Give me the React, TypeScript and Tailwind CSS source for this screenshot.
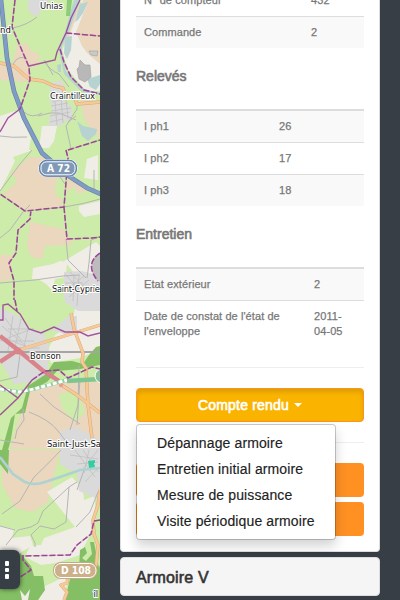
import React from "react";

type Row = [string, string];

function DataTable({ rows, cols, thick = true }: { rows: Row[]; cols: string; thick?: boolean }) {
  return (
    <div className={thick ? "border-t-2 border-[#ddd]" : ""}>
      {rows.map(([label, value], i) => (
        <div
          key={label}
          className={`grid ${cols} text-[11px] leading-[15px] tracking-[0.08px] ${i > 0 ? "border-t border-[#ddd]" : ""} ${
            (i % 2 === 0) === thick ? "bg-[#f9f9f9]" : "bg-white"
          }`}
        >
          <div className="p-2">{label}</div>
          <div className="p-2">{value}</div>
        </div>
      ))}
    </div>
  );
}

const boundaryPaths = [
  "M15 0L12 27L29 67L30 80L20 109M66 33L100 36M60 49L64 62L71 77L84 90L100 94M68 150L100 140",
  "M66 150L68 158L64 207L25 211L0 194M31 210L30 219L18 230L16 253L9 263L14 281L14 300M64 207L67 239L92 238L100 237M100 253Q84 264 98 281",
  "M15 300L17 311M32 380L45 371L59 370L68 378L92 367L100 369",
  "M100 520L94 521L91 534L77 545L70 555L23 556M23 555V560L31 570L20 577",
];

const solidBoundaryPaths = [
  "M20 109L8 118L0 132M29 66L55 60L57 52L66 33L71 18L80 0",
  "M0 320H3V305L8 304L20 314L29 329L41 333L54 327L65 332L80 332L88 336L100 333M0 385L18 398L32 380M18 398L0 415",
];

function MapView() {
  const street = { fill: "none", stroke: "#b5b5b5", strokeWidth: 1 };
  const label = {
    fontFamily: '"DejaVu Sans", "Noto Sans", sans-serif',
    fill: "#111",
    stroke: "#fff",
    strokeWidth: 2,
    paintOrder: "stroke" as const,
    strokeLinejoin: "round" as const,
  };
  return (
    <svg width="100" height="600" viewBox="0 0 100 600" className="block">
      <rect width="100" height="600" fill="#cdeba9" />
      {/* fields */}
      <g fill="#ead7bd">
        <path d="M84 0H100V90L88 80L62 55L66 34L72 14Z" />
        <path d="M17 46L27 43L30 50L40 55L37 67L29 66L30 79L24 82L0 80V62L12 64Z" />
        <path d="M80 100L100 101V138L85 121Z" />
        <path d="M30 157L42 157L55 167L70 170L69 178L56 179L55 194L64 201L59 207L25 211L3 194L15 184L16 177L10 173Z" />
        <path d="M67 180L85 184V192L78 194L74 186L67 193Z" />
        <path d="M30 222L63 229L72 241L71 245L45 246L42 259L31 257L27 247Z" />
        <path d="M0 255H11V263L10 281H0Z" />
        <path d="M28 391L61 382L100 382V449H10L17 425Z" />
        <path d="M7 450H60L50 492L47 503L32 512L15 508L2 484V463L9 471Z" />
      </g>
      <path d="M58 395L71 391L82 402L85 413L75 421L63 410Z" fill="#cdeba9" />
      {/* open ground */}
      <g fill="#f0ede6">
        <path d="M0 116L18 110L31 138L29 150H0V127Z" />
        <path d="M42 126H57L54 141L49 148H39Z" />
        <path d="M0 150H33L13 157L15 161L0 191Z" />
        <path d="M87 159L98 155V180L84 178Z" />
        <path d="M79 206L100 201V214L84 217L79 211Z" />
        <path d="M33 268L53 264L60 261L67 262L66 277L55 279L52 290L46 284L38 279L32 279Z" />
        <path d="M64 261L96 242L100 246V280L80 280Z" />
        <path d="M55 335L72 322L76 304L93 300H100V350L80 358L51 363L47 352Z" />
        <path d="M80 300L84 317L100 311V300Z" />
        <path d="M47 492L72 477L83 489L84 500L95 496V525L80 555L56 563L41 565L25 557L30 546L41 545L44 538L75 527Z" />
        <path d="M0 526L14 529L12 538L30 536L33 545L20 553H0Z" />
        <path d="M37 590L68 575L65 600H39Z" />
      </g>
      {/* built-up areas */}
      <g fill="#dadada">
        <path d="M28 0H50L41 10L37 17L29 12Z" />
        <path d="M50 84L61 80L66 89L62 99L72 107L72 121H63L62 126H49V118L53 112L50 101Z" />
        <path d="M0 308L20 317L29 329L43 331L49 348L47 374L32 382L14 384L0 361Z" />
        <path d="M52 330L69 316H77V334H64Z" />
        <path d="M64 272L82 271L100 276V311H78L64 301Z" />
        <path d="M60 431L76 427L100 440V500L79 491L77 474L60 464Z" />
        <path d="M70 450H100V487L91 492L80 477Z" />
      </g>
      {/* river and ponds */}
      <path d="M75 0H83L70 34L62 50L68 70L86 91H100V64L88 54L82 46L76 32L80 22L87 4Z" fill="#f0ede6" />
      <g fill="#b6d3d2">
        <path d="M74 0L80 0L70 29L62 46L62 56L66 71L81 88L95 92H100V95L82 92L64 74L59 50L65 32Z" />
        <path d="M80 4L88 2L83 13L78 20L75 22Z" />
        <path d="M65 37L72 36L71 50L67 59L64 53Z" />
        <path d="M87 79L100 75V84L96 90L90 87Z" />
        <path d="M57 65L61 64V72H58Z" />
        <path d="M77 121L83 126L97 129L96 134L88 141L82 136Z" />
        <path d="M98 253L93 263V270L99 280H100V253Z" />
      </g>
      <path d="M80 60L85 65L90 65L91 77L85 82L79 79L77 69L79 67Z" fill="#b8b8b8" stroke="#9f9f9f" strokeWidth=".6" />
      <path d="M89 51L98 51L97 56L91 55Z" fill="#c5caca" stroke="#a0a0a0" strokeWidth=".6" />
      <path d="M100 253Q84 266 100 282Z" fill="#bcbcbc" />
      <path d="M72 0L70 16L66 16L67 0Z" fill="#8dcc78" />
      {/* woods */}
      <g fill="#84be65">
        <path d="M0 450H9L8 474L0 464Z" />
        <path d="M28 386L46 374L54 362L72 361L83 364L89 355L96 347L100 346V365L80 369L57 371L47 382L30 391L25 413L15 414L11 439L8 450H2L11 418L22 408Z" />
        <path d="M20 553L31 566L34 576L43 576L45 590L38 600H0V580H20Z" />
        <path d="M80 550L85 547L87 553L82 558L86 561L92 554L90 542L94 542L99 568L100 565V600H65L70 579L79 570Z" />
      </g>
      <path d="M20 590L25 596L30 589L28 600H22Z" fill="#f0ede6" />
      {/* minor streets */}
      <g {...street}>
        <path d="M13 28Q27 25 37 17M44 60Q49 70 59 74L69 87M46 63L53 75M38 116L50 113L59 113L76 120M77 103V109L66 126L70 144L71 150M0 136Q12 138 27 137M24 112Q32 119 42 113M68 122L76 116M13 64Q19 54 27 59" />
        <path d="M32 150L20 164L0 191M0 238L10 230L23 212L30 205M60 177L65 184M64 207Q84 204 100 199M66 239L68 260L86 278M0 283L35 280L63 276L80 275M87 278L89 263L91 240L99 237M94 170V190" />
        <path d="M0 440L24 444M23 409L24 420L17 430L15 439M29 412Q50 420 58 431L65 440M40 394L54 407L80 424M0 381L17 377L20 354M79 366L78 405L70 430M80 379L77 425" />
        <path d="M61 450Q43 469 34 477L20 501L2 514M77 482L69 487L43 511L38 523L31 527L18 530L6 545M69 487L66 522L54 529L40 526L31 535L35 543V547M0 526L15 530M76 527L90 512L98 492M77 490L84 470" />
      </g>
      <g stroke="#c0c0c0" strokeWidth=".8" fill="none">
        <path d="M52 102L67 98M51 106L68 103M51 111L71 108M50 116L70 112M55 102L57 125M61 98L63 123M66 99L68 119M50 122L63 119" />
        <path d="M5 318L21 340M2 326L26 346M0 336L30 348M13 316L8 351M21 319L14 352M28 329L23 351M0 341L34 328M8 329H30M13 341H34M17 348H40" />
        <path d="M65 274L81 292M70 272L87 290M66 290L84 276M69 297L89 280M65 283H83M74 274L73 301M79 276L77 306" />
        <path d="M75 450L95 477M83 450L98 472M70 455L98 459M77 464L98 462M81 471L98 450M85 482L98 468M89 450L84 473" />
      </g>
      {/* railway */}
      <path d="M0 352H100" stroke="#a5a5a5" strokeWidth="2" />
      <path d="M0 457L13 474L25 482Q34 486 45 482L60 477L80 470L100 468" stroke="#add2cf" strokeWidth="2.6" fill="none" />
      {/* roads */}
      <g fill="none" stroke="#d3ab80" strokeWidth="3.4" strokeLinejoin="round">
        <path d="M0 63L14 66L29 79L43 81L54 86L63 88L65 94L75 99L77 104L100 102" />
        <path d="M19 350L71 334L100 325M71 313L74 329L83 353L82 362L86 368L88 405L92 438M60 384L77 395L100 413" />
        <path d="M100 490L98 505L93 520L94 534L98 545L96 566M68 577L67 583L61 585L67 592L64 600" />
      </g>
      <g fill="none" stroke="#f8c995" strokeWidth="2.4" strokeLinejoin="round">
        <path d="M0 63L14 66L29 79L43 81L54 86L63 88L65 94L75 99L77 104L100 102" />
        <path d="M19 350L71 334L100 325M71 313L74 329L83 353L82 362L86 368L88 405L92 438M60 384L77 395L100 413" />
        <path d="M100 490L98 505L93 520L94 534L98 545L96 566M68 577L67 583L61 585L67 592L64 600" />
      </g>
      <path d="M0 336L18 350L42 370L59 381M0 362L18 350" stroke="#d9848a" strokeWidth="4.4" fill="none" />
      <circle cx="18" cy="351" r="3.5" fill="#d9848a" />
      <circle cx="61" cy="385" r="2.2" fill="#e89d91" />
      <path d="M0 389L19 392L34 389L67 380" stroke="#8ed0a0" strokeWidth="3.5" fill="none" />
      <path d="M0 389L19 392L34 389L67 380" stroke="#fff" strokeWidth="3" strokeDasharray="4 2" fill="none" />
      <path d="M67 381L100 379" stroke="#80c58f" strokeWidth="4.5" />
      <circle cx="102" cy="376" r="7" fill="#89bd94" stroke="#fff" />
      <path d="M1 0L7 58L14 91L24 118L42 153L70 177L87 188L103 195" fill="none" stroke="#6882a8" strokeWidth="4.6" />
      <path d="M1 0L7 58L14 91L24 118L42 153L70 177L87 188L103 195" fill="none" stroke="#7f9bc6" strokeWidth="3.4" />
      {/* commune boundaries */}
      <g fill="none" stroke="#9b4595">
        {boundaryPaths.map((d) => (
          <g key={d}>
            <path d={d} strokeWidth="1.2" opacity=".25" />
            <path d={d} strokeWidth="1.5" strokeDasharray="6 2" />
          </g>
        ))}
        {solidBoundaryPaths.map((d) => (
          <path key={d} d={d} strokeWidth="1.4" opacity=".9" />
        ))}
      </g>
      <path d="M88 461L95 460V463L94 463L95 467L89 468Z" fill="#33cda0" />
      {/* place names */}
      <g {...label}>
        <text x="40" y="8.5" fontSize="8.5" textLength="23">Unias</text>
        <text x="0" y="32.5" fontSize="8.5">nd</text>
        <text x="50" y="98.5" fontSize="8.5" textLength="45">Craintilleux</text>
        <text x="52" y="292" fontSize="8.5" textLength="48">Saint-Cyprie</text>
        <text x="30" y="358.5" fontSize="8.5" textLength="31">Bonson</text>
        <text x="47" y="447" fontSize="9.4" textLength="54" lengthAdjust="spacingAndGlyphs">Saint-Just-Sa</text>
        <text x="93.5" y="597" fontSize="8.5">îl</text>
      </g>
      {/* road shields */}
      <rect x="38.5" y="159.5" width="39" height="17.5" rx="8" fill="#fff" />
      <rect x="39.5" y="160.3" width="37" height="16" rx="7" fill="#7792b5" stroke="#587bad" />
      <rect x="41" y="161.8" width="34" height="13" rx="5.5" fill="#7f99b7" stroke="#fff" strokeWidth="1" />
      <text x="47" y="172.3" fontFamily="DejaVu Sans" fontSize="10" fontWeight="bold" fill="#fff" textLength="23" lengthAdjust="spacingAndGlyphs">A 72</text>
      <rect x="53" y="562" width="44.5" height="17" rx="8" fill="#c5aa85" />
      <rect x="54.5" y="563.5" width="41.5" height="14" rx="6.5" fill="#cbb08a" stroke="#fff" />
      <text x="61" y="574.3" fontFamily="DejaVu Sans" fontSize="10" fontWeight="bold" fill="#fff" textLength="30" lengthAdjust="spacingAndGlyphs">D 108</text>
    </svg>
  );
}

const actions = ["Dépannage armoire", "Entretien initial armoire", "Mesure de puissance", "Visite périodique armoire"];

export default function App() {
  return (
    <div className="relative flex h-[600px] w-[400px] overflow-hidden bg-[#373e45] font-['Liberation_Sans',Arial,sans-serif]">
      <div className="w-[100px] shrink-0 overflow-hidden">
        <MapView />
      </div>
      <button
        aria-label="Menu"
        className="absolute top-[550px] left-0 flex h-[39px] w-5 flex-col items-start justify-center gap-[2px] rounded-r-[6px] bg-[#373e45] pt-px pl-[5px] shadow-[0_0_5px_rgba(0,0,0,0.65)]"
      >
        <span className="h-[4.5px] w-1 rounded-[1px] bg-white" />
        <span className="h-[4.5px] w-1 rounded-[1px] bg-white" />
        <span className="h-[4.5px] w-1 rounded-[1px] bg-white" />
      </button>
      <main className="ml-5 flex w-[260px] flex-col gap-[5px]">
        <section className="h-[552px] shrink-0 rounded-b-[4px] border border-t-0 border-[#ddd] bg-white px-[15px] text-[#777] shadow-[0_1px_1px_rgba(0,0,0,0.05)]">
          <div className="-mt-[15px] [-webkit-text-stroke:0.25px_#777]">
            <DataTable
              thick={false}
              cols="grid-cols-[167px_1fr]"
              rows={[
                ["N° de compteur", "432"],
                ["Commande", "2"],
              ]}
            />
          </div>
          <h4 className="mt-5 mb-[25px] text-[14px] leading-4 [-webkit-text-stroke:0.6px_#777]">Relevés</h4>
          <div className="[-webkit-text-stroke:0.25px_#777]">
            <DataTable
              cols="grid-cols-[135px_1fr]"
              rows={[
                ["I ph1", "26"],
                ["I ph2", "17"],
                ["I ph3", "18"],
              ]}
            />
          </div>
          <h4 className="mt-5 mb-[25px] text-[14px] leading-4 [-webkit-text-stroke:0.6px_#777]">Entretien</h4>
          <div className="[-webkit-text-stroke:0.25px_#777]">
            <DataTable
              cols="grid-cols-[170px_1fr]"
              rows={[
                ["Etat extérieur", "2"],
                ["Date de constat de l'état de l'enveloppe", "2011-04-05"],
              ]}
            />
          </div>
          <hr className="mt-5 mb-5 border-[#eee]" />
          <div className="relative">
            <button className="flex h-[34px] w-full items-center justify-center rounded-[4px] border border-[#ff9123] bg-[#fab400] text-[14px] tracking-[0.2px] text-white shadow-[inset_0_3px_5px_rgba(0,0,0,0.125)] [-webkit-text-stroke:0.6px_#fff]">
              Compte rendu
              <span className="ml-[5px] border-x-4 border-t-4 border-x-transparent border-t-white" />
            </button>
            <div className="absolute top-9 left-0 z-10 h-[116px] w-[200px] rounded-[4px] border border-black/20 bg-white bg-clip-padding py-[5px] text-[14px] leading-[26px] text-[#222] shadow-[0_6px_12px_rgba(0,0,0,0.175)]">
              {actions.map((action) => (
                <div key={action} className="pl-5 tracking-[0.12px] whitespace-nowrap [-webkit-text-stroke:0.15px_#222]">
                  {action}
                </div>
              ))}
            </div>
          </div>
          <hr className="my-5 border-[#eee]" />
          <div className="flex flex-col gap-[5px]">
            <div className="h-[34px] rounded-[4px] bg-[#ff9123]" />
            <div className="h-[34px] rounded-[4px] bg-[#ff9123]" />
          </div>
        </section>
        <section className="h-[39px] shrink-0 rounded-[4px] border border-[#ddd] bg-[#f5f5f5] px-[15px] pt-[10px] text-[16px] leading-[19px] tracking-[0.2px] text-[#333] [-webkit-text-stroke:0.6px_#333]">
          Armoire V
        </section>
      </main>
    </div>
  );
}
